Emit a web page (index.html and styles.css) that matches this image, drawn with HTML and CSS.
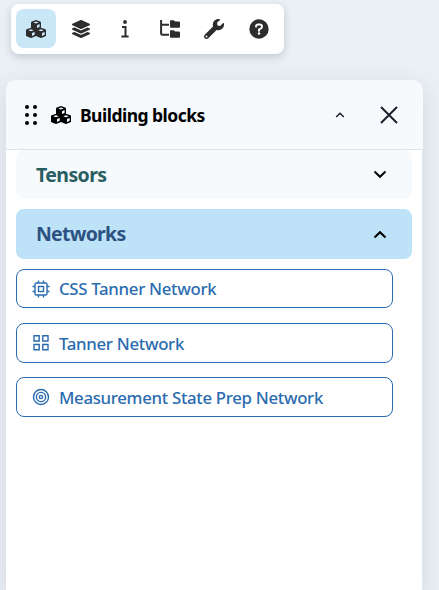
FILE: index.html
```
<!DOCTYPE html>
<html lang="en">
<head>
<meta charset="utf-8">
<title>Building blocks</title>
<link rel="stylesheet" href="styles.css">
</head>
<body>
<svg width="0" height="0" class="defs" aria-hidden="true">
  <symbol id="cube" viewBox="0 0 10 10">
    <path fill="currentColor" fill-rule="evenodd" d="M4.300.200Q5 0 5.700.200L9.200 1.500Q10 1.800 10 2.700V7.300Q10 8.100 9.300 8.500L5.800 9.900Q5 10.200 4.200 9.900L.700 8.500Q0 8.100 0 7.300V2.700Q0 1.800.800 1.500ZM5 1.400 2.300 2.500 5 3.500 7.700 2.500ZM6 5.200V8.100L8.600 7V4.100Z"/>
  </symbol>
  <symbol id="cubes" viewBox="0 0 20 18">
    <use href="#cube" x="4.700" y="0" width="10.600" height="10"/>
    <use href="#cube" x="-.2" y="7.700" width="10.400" height="10.200"/>
    <use href="#cube" x="9.800" y="7.700" width="10.400" height="10.200"/>
  </symbol>
</svg>
<nav class="toolbar">
  <button class="tool active"><svg width="20" height="18"><use href="#cubes"/></svg></button>
  <button class="tool"><svg width="18" height="18" viewBox="0 0 512 512"><path fill="currentColor" d="M12.400 148l232.900 105.700c6.800 3.100 14.500 3.100 21.300 0L499.600 148c16.500-7.500 16.500-32.500 0-40L266.600 2.300a26 26 0 0 0-21.300 0L12.400 108c-16.500 7.500-16.500 32.500 0 40zm487.200 88.300l-58.100-26.300-161.600 73.300a58 58 0 0 1-47.800 0L70.500 210l-58.100 26.300c-16.500 7.500-16.500 32.500 0 40l232.900 105.600c6.800 3.100 14.500 3.100 21.300 0l233-105.600c16.500-7.500 16.500-32.500 0-40zm0 127.800l-57.900-26.200-161.800 73.400a58 58 0 0 1-47.800 0L70.300 337.900l-57.900 26.200c-16.500 7.500-16.500 32.500 0 40l232.900 105.600c6.800 3.100 14.500 3.100 21.300 0l233-105.600c16.500-7.500 16.500-32.500 0-40z"/></svg></button>
  <button class="tool"><svg width="8" height="18" viewBox="0 0 8 18"><circle cx="4" cy="2" r="1.900" fill="currentColor"/><path d="M1 7h3.500v9.500M.400 16.600h7.200" fill="none" stroke="currentColor" stroke-width="2"/></svg></button>
  <button class="tool"><svg width="20" height="18" viewBox="0 0 20 18"><path d="M1.100 0v13.500q0 1.300 1.300 1.300H9M1 4.800h8" fill="none" stroke="currentColor" stroke-width="2"/><path d="M10.500.300h3.300l1.200 1.200h4q1 0 1 1v4.200q0 1-1 1h-8q-1 0-1-1V.800q0-.500.500-.500zm0 10h3.300l1.200 1.200h4q1 0 1 1v4.200q0 1-1 1h-8q-1 0-1-1v-5.900q0-.500.500-.500z" fill="currentColor"/></svg></button>
  <button class="tool"><svg width="20" height="20" viewBox="0 0 512 512"><path fill="currentColor" d="M507.700 109.100c-2.200-9-13.500-12.100-20.100-5.500l-74.400 74.400-67.900-11.300L334 98.900l74.400-74.400c6.600-6.600 3.400-17.900-5.700-20.200-47.400-11.700-99.600.900-136.600 37.900-39.600 39.600-50.500 97.100-34.100 147.200L18.700 402.800c-25 25-25 65.500 0 90.500s65.500 25 90.500 0l213.200-213.200c50.100 16.700 107.500 5.700 147.400-34.200 37.100-37.100 49.700-89.300 37.900-136.800zM64 472a24 24 0 1 1 0-48 24 24 0 0 1 0 48z"/></svg></button>
  <button class="tool"><svg width="20" height="20" viewBox="0 0 20 20"><circle cx="10" cy="10" r="9.700" fill="currentColor"/><path d="M7 7.600Q7.100 5.500 9.200 5.500h1.500q2.300 0 2.300 2 0 1.300-1.200 2L10 10.600v1.300" fill="none" stroke="#fff" stroke-width="1.900" stroke-linecap="round"/><circle cx="10" cy="14.600" r="1.250" fill="#fff"/></svg></button>
</nav>
<section class="panel">
  <header class="head">
    <svg class="grip" width="14" height="22" viewBox="0 0 14 22"><g fill="#000"><circle cx="3" cy="3" r="2"/><circle cx="11" cy="3" r="2"/><circle cx="3" cy="11" r="2"/><circle cx="11" cy="11" r="2"/><circle cx="3" cy="19" r="2"/><circle cx="11" cy="19" r="2"/></g></svg>
    <svg class="title-icon" width="20" height="18"><use href="#cubes"/></svg>
    <h1><span class="t-title">Building blocks</span></h1>
    <svg class="collapse" width="10" height="8" viewBox="0 0 10 8"><path d="M1.200 6 5 2.200 8.800 6" fill="none" stroke="#1a202c" stroke-width="1.500"/></svg>
    <svg class="close" width="18" height="18" viewBox="0 0 18 18"><path d="M1 1l16 16M17 1 1 17" fill="none" stroke="#1a202c" stroke-width="2"/></svg>
  </header>
  <div class="body">
    <div class="group tensors"><span class="t-tensors">Tensors</span><svg width="14" height="9" viewBox="0 0 14 9"><path d="M1.500 1.500 7 6.800l5.500-5.300" fill="none" stroke="#000" stroke-width="2"/></svg></div>
    <div class="group networks"><span class="t-networks">Networks</span><svg width="14" height="9" viewBox="0 0 14 9"><path d="M1.500 7.500 7 2.200l5.500 5.300" fill="none" stroke="#000" stroke-width="2"/></svg></div>
    <div class="list">
      <button class="item short"><svg width="18" height="18" viewBox="0 0 18 18" fill="none" stroke="currentColor" stroke-width="1.400"><rect x="3" y="3" width="12" height="12" rx="1.500"/><rect x="6.500" y="6.500" width="5" height="5"/><path d="M6.500.500V3M11.500.500V3M6.500 15v2.500M11.500 15v2.500M.500 6.500H3M.500 11.500H3M15 6.500h2.500M15 11.500h2.500"/></svg><span class="t-css">CSS Tanner Network</span></button>
      <button class="item"><svg width="18" height="18" viewBox="0 0 18 18" fill="none" stroke="currentColor" stroke-width="1.400"><path d="M2 1.800h5.200V7H2zM10.800 1.800H16V7h-5.200zM2 10.500h5.200v5.200H2zM10.800 10.500H16v5.200h-5.200z"/></svg><span class="t-tanner">Tanner Network</span></button>
      <button class="item"><svg width="18" height="18" viewBox="0 0 18 18" fill="none" stroke="currentColor" stroke-width="1.400"><circle cx="9" cy="9" r="7.500"/><circle cx="9" cy="9" r="4.600"/><circle cx="9" cy="9" r="1.600"/></svg><span class="t-measure">Measurement State Prep Network</span></button>
    </div>
  </div>
</section>
</body>
</html>
```
FILE: styles.css
```
* { box-sizing: border-box; }
body {
  margin: 0;
  height: 590px;
  overflow: hidden;
  background: #ebf0f4;
  font-family: "Noto Sans", "Open Sans", sans-serif;
}
.defs { position: absolute; }
button { font: inherit; border: 0; background: none; padding: 0; }
svg { flex: none; display: block; }
.toolbar {
  display: flex;
  gap: 4.500px;
  width: 273px;
  height: 50px;
  margin: 4px 0 0 11px;
  padding: 5px;
  background: #fff;
  border-radius: 8px;
  box-shadow: 0 3px 8px rgba(45, 65, 90, .22);
}
.tool {
  display: flex;
  flex: none;
  align-items: center;
  justify-content: center;
  width: 40px;
  height: 39px;
  border-radius: 8px;
  color: #2d2d2d;
}
.active { background: #cae7f8; }
.panel {
  width: 417px;
  height: 511px;
  margin: 25px 0 0 6px;
  border-radius: 10px 10px 0 0;
  background: #fff;
  border-right: 1px solid #e2e8f0;
  box-shadow: 0 8px 24px rgba(45, 65, 90, .14);
}
.head {
  display: flex;
  align-items: center;
  width: 417px;
  height: 71px;
  padding: 0 24px 0 18px;
  background: #f6fafd;
  border-top: 1px solid #e2e8f0;
  border-bottom: 1px solid #dce5ee;
  border-radius: 10px 10px 0 0;
}
.title-icon { margin-left: 13px; }
h1 { margin: 0 0 0 9px; font-size: 17.500px; line-height: 24px; font-weight: 700; }
.collapse { margin-left: auto; }
.close { margin-left: 35px; margin-right: 1px; }
.body { padding: 0 10px; }
.group {
  display: flex;
  align-items: center;
  justify-content: space-between;
  padding: 0 25px 0 20px;
  border-radius: 8px;
  font-size: 19.500px;
  font-weight: 700;
}
.tensors { height: 49px; background: #f6fafd; color: #285e61; }
.networks { height: 50px; margin-top: 10px; background: #bee3f8; color: #2c5282; }
.list { display: flex; flex-direction: column; width: 377px; margin-top: 10px; }
.item {
  display: flex;
  align-items: center;
  gap: 9px;
  height: 40px;
  margin-bottom: 14px;
  padding: 0 15px;
  border: 1px solid #2b6cb0;
  border-radius: 8px;
  color: #2b6cb0;
  font-size: 16.800px;
  font-weight: 550;
}
.short { height: 39px; margin-bottom: 15px; }
span { white-space: nowrap; }
.t-title { letter-spacing: -.520px; }
.t-tensors { letter-spacing: -.600px; }
.t-networks { letter-spacing: -.750px; }
.networks span { position: relative; top: -1px; }
.item span { letter-spacing: -.300px; }
```
